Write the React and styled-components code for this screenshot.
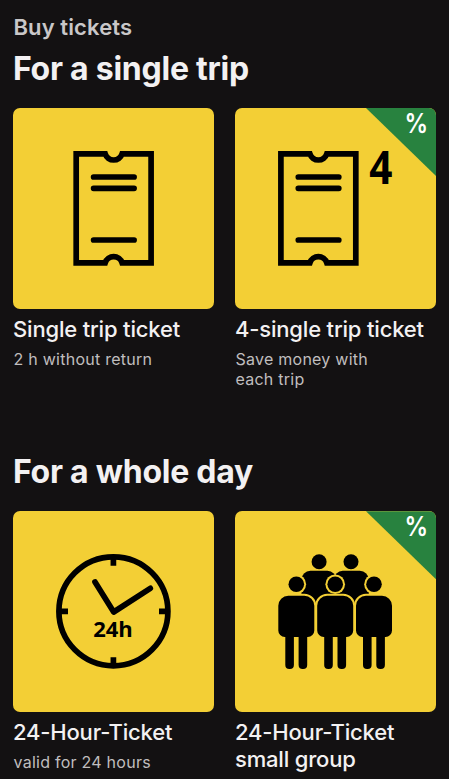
import React from 'react'
import styled, { createGlobalStyle } from 'styled-components';

const GlobalStyle = createGlobalStyle`
  * {
    box-sizing: border-box;
  }
  body {
    margin: 0;
    background-color: #131112;
    overflow: hidden;
  }
`

const Root = styled.div`
  height: 779px;
  padding: 14px 13px 0;
  overflow: hidden;
  background-color: #131112;
  color: #f3f1f2;
  font-family: Inter, "Liberation Sans", sans-serif;
`

const PageLabel = styled.div`
  padding: 1px 0 0 0.5px;
  font-size: 22px;
  font-weight: 600;
  line-height: 25px;
  letter-spacing: 0.1px;
  color: #c9c7c8;
`

const Section = styled.section`
  height: 403.3px;
`

const SectionTitle = styled.h2`
  margin: 0;
  padding-top: 9px;
  height: 68px;
  font-size: 32px;
  font-weight: 700;
  line-height: 40px;
  letter-spacing: -0.25px;
  white-space: nowrap;
`

const Grid = styled.div`
  display: grid;
  grid-template-columns: 201px 201px;
  column-gap: 21px;
`

const Tile = styled.div`
  position: relative;
  height: 201px;
  border-radius: 7px;
  overflow: hidden;
  background-color: #f3cf35;
  & svg {
    display: block;
  }
`

const Corner = styled.div`
  position: absolute;
  top: 0;
  right: 0;
  width: 70px;
  height: 68px;
  padding: 0 8px 0 0;
  background-color: #28823f;
  clip-path: polygon(0 0, 100% 0, 100% 100%);
  text-align: right;
`

const Percent = styled.span`
  display: inline-block;
  color: #ffffff;
  font-size: 27px;
  font-weight: 600;
  line-height: 31px;
  transform: scaleX(0.87);
  transform-origin: right;
`

const Name = styled.div`
  padding-top: 7px;
  font-size: 22px;
  font-weight: 500;
  line-height: 26.5px;
  letter-spacing: -0.18px;
  white-space: nowrap;
`

const Desc = styled.div`
  width: ${props => props.$width || 'auto'};
  margin-top: 6.5px;
  padding-left: 0.5px;
  font-size: 16px;
  line-height: 20px;
  letter-spacing: 0.25px;
  color: #c0bebf;
`

function TicketShape({ shift = 0 }) {
  return (
    <g transform={`translate(${shift} 0)`} fill="none" stroke="#000" strokeWidth="5.7">
      <path d="M63.2 45.9H92.2A8.9 8.9 0 0 0 109.1 45.9H138.1V154.8H109.1A8.9 8.9 0 0 0 92.2 154.8H63.2Z" />
      <path d="M80.6 69H121.1M80.6 80.3H121.1M80.6 132H121.1" strokeLinecap="round" />
    </g>
  )
}

function SingleIcon() {
  return (
    <svg width="201" height="201" viewBox="0 0 201 201">
      <TicketShape />
    </svg>
  )
}

function FourIcon() {
  return (
    <svg width="201" height="201" viewBox="0 0 201 201">
      <TicketShape shift={-17.3} />
      <text
        transform="translate(134.2 76) scale(0.88 1)"
        fontFamily="Open Sans, Noto Sans, sans-serif"
        fontSize="46"
        fontWeight="700"
      >
        4
      </text>
    </svg>
  )
}

function ClockIcon() {
  return (
    <svg width="201" height="201" viewBox="0 0 201 201">
      <g fill="none" stroke="#000" strokeWidth="5.7">
        <circle cx="100.4" cy="100.3" r="54.5" />
        <path d="M100.4 44V54.7M100.4 146.3V156M44 100.3H55M146 100.3H156" />
        <path d="M82 71L100.7 101L137.3 77.3" strokeLinecap="round" strokeLinejoin="round" />
      </g>
      <text
        x="80.2"
        y="125.6"
        fontFamily="Open Sans, Noto Sans, sans-serif"
        fontSize="22"
        fontWeight="700"
      >
        24h
      </text>
    </svg>
  )
}

const people = [61.3, 100.2, 139]

function bodyPath(cx) {
  return `M${cx - 8} 84.7H${cx + 8}A10 10 0 0 1 ${cx + 18} 94.7V119.5A6.5 6.5 0 0 1 ${cx + 11.5} 126H${cx - 11.5}A6.5 6.5 0 0 1 ${cx - 18} 119.5V94.7A10 10 0 0 1 ${cx - 8} 84.7Z`
}

function GroupIcon() {
  return (
    <svg width="201" height="201" viewBox="0 0 201 201">
      <circle cx="84.1" cy="50.7" r="7.5" />
      <circle cx="116" cy="50.7" r="7.5" />
      <rect x="66.4" y="59.8" width="35" height="36" rx="9" />
      <rect x="98.8" y="59.8" width="35" height="36" rx="9" />
      {/* gaps around the front row */}
      {people.map(cx => (
        <g key={cx} fill="#f3cf35" stroke="#f3cf35">
          <circle cx={cx} cy="73.3" r="9.8" stroke="none" />
          <path d={bodyPath(cx)} strokeWidth="4" />
        </g>
      ))}
      {people.map(cx => (
        <g key={cx}>
          <circle cx={cx} cy="73.3" r="7.8" />
          <path d={bodyPath(cx)} />
          <rect x={cx - 11} y="118" width="8.6" height="40" rx="4" />
          <rect x={cx + 2.3} y="118" width="8.6" height="40" rx="4" />
        </g>
      ))}
    </svg>
  )
}

function Ticket({ icon, name, desc, descWidth, discount }) {
  return (
    <div>
      <Tile>
        {icon}
        {discount && <Corner><Percent>%</Percent></Corner>}
      </Tile>
      <Name>{name}</Name>
      {desc && <Desc $width={descWidth}>{desc}</Desc>}
    </div>
  )
}

function App() {
  return (
    <Root>
      <GlobalStyle />
      <PageLabel>Buy tickets</PageLabel>
      <Section>
        <SectionTitle>For a single trip</SectionTitle>
        <Grid>
          <Ticket icon={<SingleIcon />} name="Single trip ticket" desc="2 h without return" />
          <Ticket
            icon={<FourIcon />}
            name="4-single trip ticket"
            desc="Save money with each trip"
            descWidth="150px"
            discount
          />
        </Grid>
      </Section>
      <Section>
        <SectionTitle>For a whole day</SectionTitle>
        <Grid>
          <Ticket icon={<ClockIcon />} name="24-Hour-Ticket" desc="valid for 24 hours" />
          <Ticket icon={<GroupIcon />} name={<>24-Hour-Ticket<br />small group</>} discount />
        </Grid>
      </Section>
    </Root>
  );
}

export default App;
